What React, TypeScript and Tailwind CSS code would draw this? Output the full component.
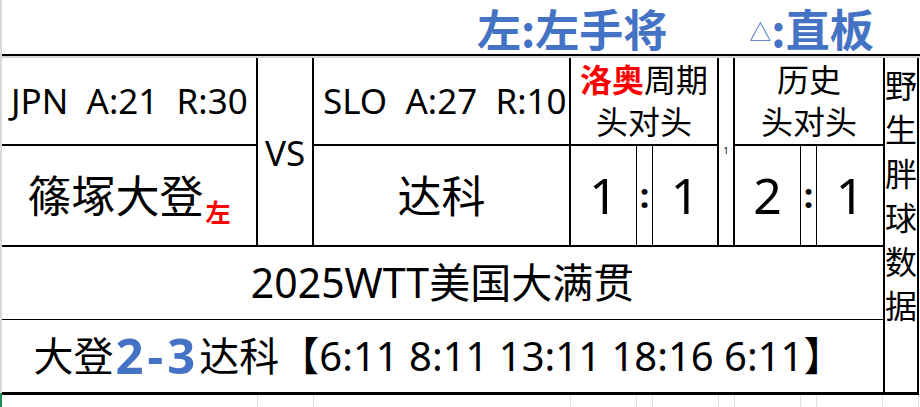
const FONT = { fontFamily: '"Noto Sans", "Noto Sans CJK SC", sans-serif' };
const CJK = { fontFamily: '"Noto Sans CJK SC", "Noto Sans", sans-serif' };

export default function App() {
  return (
    <div className="relative w-[920px] h-[407px] overflow-hidden bg-white text-black" style={FONT}>
      {/* sheet left edge */}
      <div className="absolute left-0 top-0 w-[2px] h-[393px] bg-[#d9d9d9]" />
      <div className="absolute left-0 top-[393px] w-[2px] h-[14px] bg-[#1e8c5a]" />

      <div className="pl-[2px]">
        {/* title row */}
        <div className="h-[54px] flex items-center pl-[475px] font-bold text-[#4472c4]" style={CJK}>
          <span className="text-[44px] leading-[48px] pt-[2px]">左:左手将</span>
          <span className="ml-[82px] text-[22px] leading-[30px] font-normal pt-[6px]">△</span>
          <span className="text-[44px] leading-[48px] pt-[2px]">:直板</span>
        </div>
        <div className="h-[2px] bg-black" />
        <div className="h-[2px] bg-[#d4d4d4]" />

        {/* main table */}
        <div className="grid grid-cols-[256px_56px_257px_66px_16px_66px_16px_66px_16px_66px_36px] grid-rows-[88px_101px_73px_72px]">
          <div className="col-start-1 row-start-1 border-r-2 border-b-2 border-black flex items-center pl-[9px] text-[35px] whitespace-pre">
            JPN  A:21  R:30
          </div>
          <div className="col-start-2 row-start-1 row-span-2 border-r-2 border-b-2 border-black flex items-center justify-center text-[35px] pt-[4px]">
            VS
          </div>
          <div className="col-start-3 row-start-1 border-r-2 border-b-2 border-black flex items-center pl-[9px] text-[35px] whitespace-pre">
            SLO  A:27  R:10
          </div>
          <div className="col-start-4 col-span-3 row-start-1 border-r-2 border-b-2 border-black flex flex-col items-center justify-center text-[32px] leading-[42px]">
            <div>
              <span className="font-bold text-[#ff0000]">洛奥</span>周期
            </div>
            <div>头对头</div>
          </div>
          <div className="col-start-7 row-start-1 row-span-2 border-r-2 border-b-2 border-black flex justify-center pt-[88px] text-[9px] leading-none">
            1
          </div>
          <div className="col-start-8 col-span-3 row-start-1 border-b-2 border-black flex flex-col items-center justify-center text-[32px] leading-[42px]">
            <div>历史</div>
            <div>头对头</div>
          </div>
          <div className="col-start-11 row-start-1 row-span-4 border-l-2 border-r-2 border-black flex flex-col items-center pt-[6px] text-[32px] leading-[44px]">
            <span>野</span>
            <span>生</span>
            <span>胖</span>
            <span>球</span>
            <span>数</span>
            <span>据</span>
          </div>

          <div className="col-start-1 row-start-2 border-r-2 border-b-2 border-black flex items-center justify-center">
            <span className="text-[44px] leading-none">篠塚大登</span>
            <span className="text-[25px] leading-none font-bold text-[#ff0000] self-end mb-[20px] ml-[2px]">左</span>
          </div>
          <div className="col-start-3 row-start-2 border-r-2 border-b-2 border-black flex items-center justify-center text-[44px]">
            达科
          </div>
          <div className="col-start-4 row-start-2 border-r border-b-2 border-black flex items-center justify-center text-[50px]">1</div>
          <div className="col-start-5 row-start-2 border-r border-b-2 border-black flex items-center justify-center text-[34px] font-bold">:</div>
          <div className="col-start-6 row-start-2 border-r-2 border-b-2 border-black flex items-center justify-center text-[50px]">1</div>
          <div className="col-start-8 row-start-2 border-r border-b-2 border-black flex items-center justify-center text-[50px]">2</div>
          <div className="col-start-9 row-start-2 border-r border-b-2 border-black flex items-center justify-center text-[34px] font-bold">:</div>
          <div className="col-start-10 row-start-2 border-b-2 border-black flex items-center justify-center text-[50px]">1</div>

          <div className="col-start-1 col-span-10 row-start-3 border-b border-black flex items-center justify-center text-[41px]">
            2025WTT美国大满贯
          </div>
          <div className="col-start-1 col-span-10 row-start-4 flex items-center justify-center text-[40px] pr-[8px]">
            大登
            <span className="font-bold text-[#4472c4] text-[49px] tracking-[4px] ml-[2px]">2-3</span>
            达科【6:11 8:11 13:11 18:16 6:11】
          </div>
        </div>
        <div className="h-[3px] w-[917px] bg-black" />

        {/* empty sheet cells below */}
        <div className="grid grid-cols-[256px_56px_257px_66px_16px_66px_16px_66px_16px_66px_36px] h-[20px]">
          {Array.from({ length: 11 }).map((_, i) => (
            <div key={i} className="border-r border-[#e1e1e1]" />
          ))}
        </div>
      </div>
    </div>
  );
}
